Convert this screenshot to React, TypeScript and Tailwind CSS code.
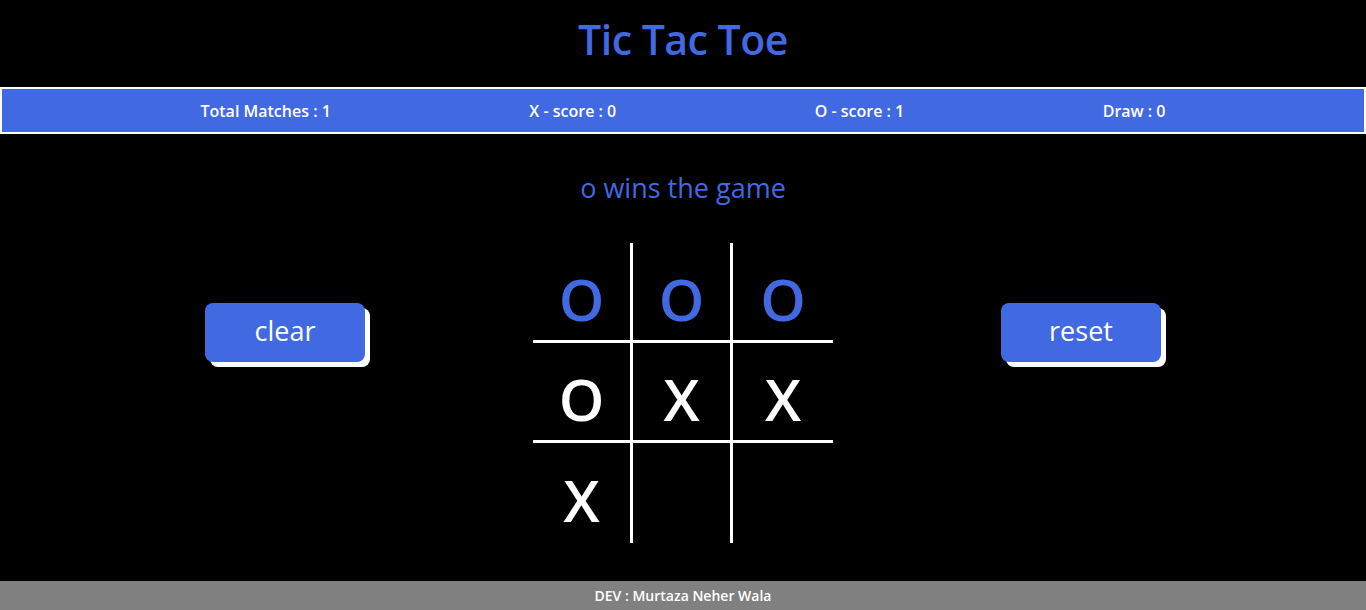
import React from "react";

const board: (string | null)[] = ["O", "O", "O", "O", "X", "X", "X", null, null];
const winning = [0, 1, 2];

export default function App() {
  return (
    <div
      className="h-[610px] w-full bg-black flex flex-col overflow-hidden"
      style={{ fontFamily: '"Open Sans", "Noto Sans", sans-serif' }}
    >
      <h1 className="h-[87px] flex items-center justify-center pb-[8px] text-[41px] font-semibold text-[#4169e1] tracking-[-0.5px]">
        Tic Tac Toe
      </h1>
      <div className="h-[47px] border-2 border-white bg-[#4169e1] flex justify-evenly items-center text-white text-[16px] font-semibold">
        <span>Total Matches : 1</span>
        <span>X - score : 0</span>
        <span>O - score : 1</span>
        <span>Draw : 0</span>
      </div>
      <div className="mt-[38px] h-[32px] flex items-center justify-center text-[27px] text-[#4169e1]">
        o wins the game
      </div>
      <div className="mt-[39px] flex justify-center gap-[168px]">
        <button className="mt-[60px] w-[160px] h-[59px] rounded-lg bg-[#4169e1] text-white text-[27px] font-medium shadow-[5px_5px_0_white] pb-[2px]">
          clear
        </button>
        <div className="grid grid-cols-[100px_100px_100px] grid-rows-[100px_100px_100px]">
          {board.map((v, i) => {
            const r = Math.floor(i / 3);
            const c = i % 3;
            return (
              <div
                key={i}
                className={`flex items-center justify-center border-white text-[58px] font-semibold leading-none ${
                  c < 2 ? "border-r-[3px]" : ""
                } ${r < 2 ? "border-b-[3px]" : ""} ${winning.includes(i) ? "text-[#4169e1]" : "text-white"}`}
              >
                <span className="pt-[14px]">{v}</span>
              </div>
            );
          })}
        </div>
        <button className="mt-[60px] w-[160px] h-[59px] rounded-lg bg-[#4169e1] text-white text-[27px] font-medium shadow-[5px_5px_0_white] pb-[2px]">
          reset
        </button>
      </div>
      <div className="mt-auto h-[29px] bg-[#808080] flex items-center justify-center text-white text-[14px] font-semibold">
        DEV : Murtaza Neher Wala
      </div>
    </div>
  );
}
